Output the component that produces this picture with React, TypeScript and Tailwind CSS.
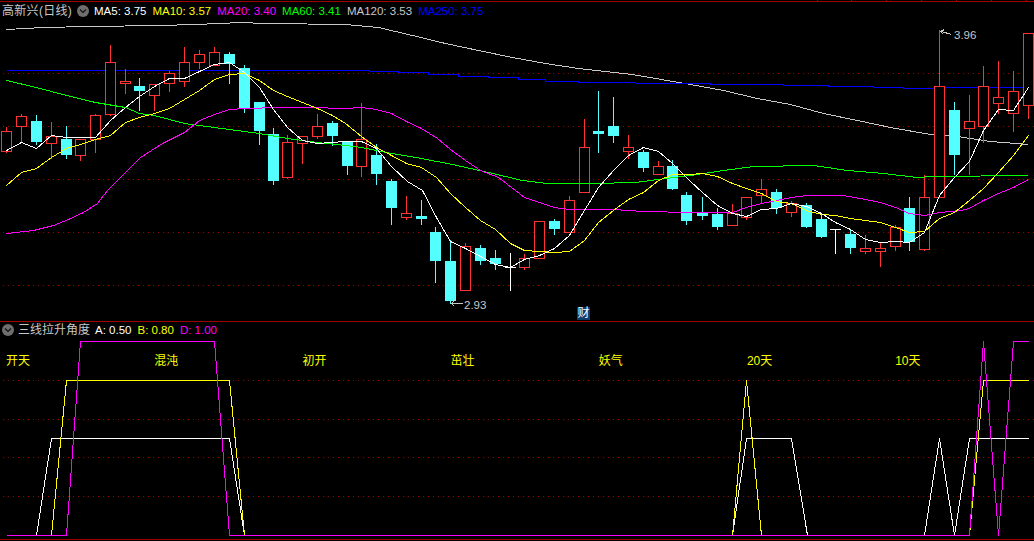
import React from "react";

type Candle = [number, number, number, number, number, string];

// x, body top, body bottom, wick top, wick bottom, colour kind
const CANDLES: Candle[] = [
  [6, 131, 151, 127, 152, "r"], [21, 116, 126, 114, 142, "r"], [36, 121, 142, 115, 144, "c"],
  [51, 136, 143, 122, 158, "r"], [66, 139, 155, 126, 158, "c"], [80, 139, 155, 139, 160, "r"],
  [95, 115, 139, 114, 152, "r"], [110, 62, 114, 45, 115, "r"], [125, 81, 83, 69, 93, "r"],
  [139, 86, 91, 78, 110, "c"], [154, 84, 95, 84, 110, "r"], [169, 73, 83, 71, 91, "r"],
  [184, 62, 81, 47, 86, "r"], [199, 54, 62, 50, 68, "r"], [214, 52, 65, 47, 65, "r"],
  [229, 54, 64, 52, 83, "c"], [244, 68, 109, 65, 112, "c"], [259, 102, 131, 102, 144, "c"],
  [273, 134, 181, 128, 184, "c"], [287, 142, 177, 135, 178, "r"], [302, 136, 143, 136, 163, "r"],
  [317, 126, 136, 114, 138, "r"], [332, 123, 136, 121, 145, "c"], [347, 142, 166, 142, 174, "c"],
  [361, 139, 166, 103, 176, "r"], [376, 155, 174, 144, 184, "c"], [391, 181, 208, 179, 224, "c"],
  [406, 213, 217, 196, 219, "r"], [421, 216, 219, 200, 224, "c"], [435, 232, 261, 227, 282, "c"],
  [450, 261, 301, 240, 303, "c"], [465, 246, 290, 243, 290, "r"], [480, 248, 261, 245, 264, "c"],
  [495, 258, 264, 250, 269, "c"], [510, 267, 267, 253, 290, "w"], [524, 258, 267, 254, 269, "r"],
  [539, 221, 258, 221, 258, "r"], [554, 221, 229, 219, 234, "c"], [569, 200, 232, 196, 232, "r"],
  [584, 147, 192, 119, 192, "r"], [598, 131, 134, 91, 152, "c"], [613, 126, 136, 97, 142, "c"],
  [628, 147, 151, 135, 158, "r"], [643, 152, 168, 150, 171, "c"], [658, 166, 174, 161, 174, "r"],
  [672, 166, 189, 160, 189, "c"], [686, 195, 221, 192, 224, "c"], [702, 213, 216, 197, 219, "c"],
  [717, 214, 227, 208, 229, "c"], [732, 213, 225, 204, 225, "r"], [746, 197, 217, 197, 219, "r"],
  [761, 189, 195, 179, 203, "r"], [776, 192, 208, 189, 213, "c"], [791, 203, 212, 201, 216, "r"],
  [806, 205, 227, 203, 227, "c"], [821, 219, 237, 214, 237, "c"], [835, 229, 229, 229, 253, "w"],
  [850, 234, 248, 229, 253, "c"], [865, 248, 251, 235, 253, "r"], [880, 248, 251, 242, 266, "r"],
  [895, 227, 246, 225, 250, "r"], [909, 208, 242, 197, 250, "c"], [924, 197, 249, 175, 250, "r"],
  [939, 86, 197, 30, 197, "r"], [954, 110, 155, 102, 174, "c"], [969, 121, 128, 95, 174, "r"],
  [983, 86, 126, 66, 142, "r"], [998, 97, 103, 61, 113, "r"], [1013, 91, 113, 71, 131, "r"],
  [1028, 33, 105, 33, 118, "r"],
];

const MA5 = "6,150 21,142 36,148 51,135 66,137 95,137 110,120 125,107 139,96 154,86 169,78 184,78 199,71 214,64 229,62 244,72 259,87 273,109 287,127 302,140 317,143 345,141 361,141 376,148 391,166 407,181 422,190 436,217 450,241 465,248 480,256 495,264 510,267 524,259 539,255 554,248 569,235 584,210 598,187 613,170 628,155 643,147 658,151 672,163 690,181 702,192 717,205 732,213 746,216 761,209 776,208 791,203 806,206 821,213 835,222 850,229 865,239 880,242 895,241 909,242 924,232 939,195 954,177 969,161 983,130 998,109 1013,110 1028,87";
const MA10 = "6,185 21,172 36,168 51,157 66,148 80,144 95,139 110,135 125,122 139,117 154,113 169,108 184,99 199,90 214,79 229,74 244,73 259,80 273,90 287,96 302,102 317,108 332,115 345,123 361,136 376,147 391,155 406,163 421,167 436,177 450,193 465,207 480,220 495,229 510,243 524,250 539,251 554,252 569,251 584,240 598,222 613,210 628,199 643,192 658,180 672,174 690,174 702,173 717,176 732,183 746,188 761,193 776,201 791,203 806,210 821,214 835,215 850,218 865,220 880,222 895,227 909,232 924,231 939,218 954,212 969,200 983,188 998,172 1013,155 1028,135";
const MA20 = "6,233 33,230 53,225 68,219 83,212 97,203 107,190 118,179 140,157 162,143 184,132 199,120 214,114 229,109 244,108 280,107 310,107 345,108 361,107 376,109 391,113 406,121 421,128 437,138 450,149 465,160 480,170 498,177 515,190 524,197 539,202 554,207 569,209 613,209 643,211 690,212 723,212 732,212 746,207 761,203 776,200 791,197 806,195 843,195 865,199 880,202 895,207 909,213 924,215 939,212 960,210 969,208 983,200 998,193 1013,187 1028,179";
const MA60 = "6,80 36,87 66,95 95,102 125,107 139,113 154,115 184,123 199,125 229,129 259,133 287,138 317,142 345,145 361,147 391,153 421,158 452,164 488,172 522,180 547,183 592,183 635,182 665,178 690,175 723,170 753,166 813,165 847,170 883,173 917,177 933,176 1028,175";
const MA120 = "6,29 43,27 88,26 162,25 222,23 237,22 267,23 345,24 378,27 412,35 445,43 478,50 512,57 545,63 578,68 632,74 690,84 723,90 757,98 790,104 823,113 857,120 890,127 930,134 957,136 990,141 1028,144";
const MA250 = "6,70 369,70 369,71 398,71 398,72 428,72 428,74 458,74 458,76 488,76 488,77 518,77 518,79 545,79 545,81 578,81 578,82 635,82 635,83 710,83 710,84 783,84 783,85 828,85 828,86 873,86 873,87 903,87 903,88 933,88 933,87 1028,87";

const SUB_WHITE = "6,535 36,535 51,438 229,438 244,535 732,535 746,438 791,438 807,535 924,535 939,438 954,535 969,438 1028,438";
const SUB_YELLOW = "51,535 66,380 229,380 244,535 732,535 746,380 761,535 969,535 983,380 1028,380";
const SUB_MAGENTA = "6,535 66,535 80,341 214,341 229,535 969,535 983,341 998,535 1013,341 1028,341";

const GRID = [73, 126, 179, 232, 285, 380, 419, 457, 496];
const TICKS = [817, 851, 886, 921, 956, 991, 1026];
const RULES = [1, 321, 539];
const LABELS = ["开天", "混沌", "初开", "茁壮", "妖气", "20天", "10天"];

const colorOf: Record<string, string> = { r: "#ff3333", c: "#54ffff", w: "#ffffff" };

function Chart() {
  return (
    <svg width={1034} height={541} shapeRendering="crispEdges" className="block">
      {RULES.map((y) => (
        <line key={y} x1={0} x2={1034} y1={y + 0.5} y2={y + 0.5} stroke="#a00000" />
      ))}
      {TICKS.map((x) => (
        <line key={x} x1={x + 0.5} x2={x + 0.5} y1={0} y2={2} stroke="#a00000" />
      ))}
      {GRID.map((y) => (
        <line key={y} x1={3} x2={1034} y1={y + 0.5} y2={y + 0.5} stroke="#9a0000" strokeDasharray="1 4" />
      ))}
      <g transform="translate(0.5 0.5)" fill="none">
        <polyline points={MA120} stroke="#c8c8c8" />
        <polyline points={MA250} stroke="#0000ff" />
      </g>
      {CANDLES.map(([x, top, bottom, hi, lo, kind]) => {
        const color = colorOf[kind];
        const cx = x + 0.5;
        return (
          <g key={x}>
            <line x1={cx} x2={cx} y1={hi} y2={lo + 1} stroke={color} />
            {kind === "w" ? (
              <line x1={x - 5} x2={x + 6} y1={top + 0.5} y2={top + 0.5} stroke={color} />
            ) : kind === "c" ? (
              <rect x={x - 5} y={top} width={11} height={bottom - top} fill={color} />
            ) : (
              <rect x={x - 5 + 0.5} y={top + 0.5} width={10} height={bottom - top} fill="#000000" stroke={color} />
            )}
          </g>
        );
      })}
      <g transform="translate(0.5 0.5)" fill="none">
        <polyline points={MA60} stroke="#00ff00" />
        <polyline points={MA20} stroke="#ff00ff" />
        <polyline points={MA10} stroke="#ffff00" />
        <polyline points={MA5} stroke="#ffffff" />
        <polyline points="941,31 951,34" stroke="#c8c8c8" />
        <polyline points="944,29 940,31 943,34" stroke="#c8c8c8" />
        <polyline points="451,303 462,303" stroke="#c8c8c8" />
        <polyline points="454,300 451,303 454,306" stroke="#c8c8c8" />
        <polyline points={SUB_WHITE} stroke="#ffffff" />
        <polyline points={SUB_YELLOW} stroke="#ffff00" />
        <polyline points={SUB_MAGENTA} stroke="#ff00ff" />
      </g>
    </svg>
  );
}

function Chevron() {
  return (
    <span className="flex h-[12px] w-[12px] shrink-0 items-center justify-center rounded-full bg-[#6e6e6e]">
      <svg width="8" height="6" viewBox="0 0 8 6" fill="none" stroke="#111111" strokeWidth="1.2">
        <path d="M1 1.5 L4 4.5 L7 1.5" />
      </svg>
    </span>
  );
}

function Value({ color, children }: { color: string; children: React.ReactNode }) {
  return <span className={color}>{children}</span>;
}

export default function App() {
  return (
    <div className="relative h-[541px] w-[1034px] overflow-hidden bg-black font-['Liberation_Sans','Noto_Sans_CJK_SC',sans-serif] text-[12px] leading-[14px]">
      <Chart />

      <div className="absolute left-[2px] top-[4px] flex items-center whitespace-nowrap">
        <span className="w-[70px] text-[12px] tracking-[0.3px] text-[#c8c8c8]">高新兴(日线)</span>
        <span className="ml-[5px]"><Chevron /></span>
        <div className="ml-[5px] flex gap-[6px] text-[11.5px]">
          <Value color="text-white">MA5: 3.75</Value>
          <Value color="text-[#ffff00]">MA10: 3.57</Value>
          <Value color="text-[#ff00ff]">MA20: 3.40</Value>
          <Value color="text-[#00ff00]">MA60: 3.41</Value>
          <Value color="text-[#c8c8c8]">MA120: 3.53</Value>
          <Value color="text-[#0000ff]">MA250: 3.75</Value>
        </div>
      </div>

      <div className="absolute left-[2px] top-[323px] flex items-center whitespace-nowrap">
        <Chevron />
        <span className="ml-[4px] text-[12px] text-[#c8c8c8]">三线拉升角度</span>
        <div className="ml-[5px] flex gap-[6px] text-[11.5px]">
          <Value color="text-white">A: 0.50</Value>
          <Value color="text-[#ffff00]">B: 0.80</Value>
          <Value color="text-[#ff00ff]">D: 1.00</Value>
        </div>
      </div>

      <div className="absolute left-[6px] top-[354px] flex text-[#ffff00]">
        {LABELS.map((label) => (
          <span key={label} className="w-[148.2px]">{label}</span>
        ))}
      </div>

      <span className="absolute left-[954px] top-[28px] text-[11.5px] text-[#c8c8c8]">3.96</span>
      <span className="absolute left-[464px] top-[298px] text-[11.5px] text-[#c8c8c8]">2.93</span>
      <span className="absolute left-[577px] top-[307px] h-[13px] w-[13px] bg-[#0a3a6b] text-center text-[12px] leading-[13px] text-white">财</span>
    </div>
  );
}
